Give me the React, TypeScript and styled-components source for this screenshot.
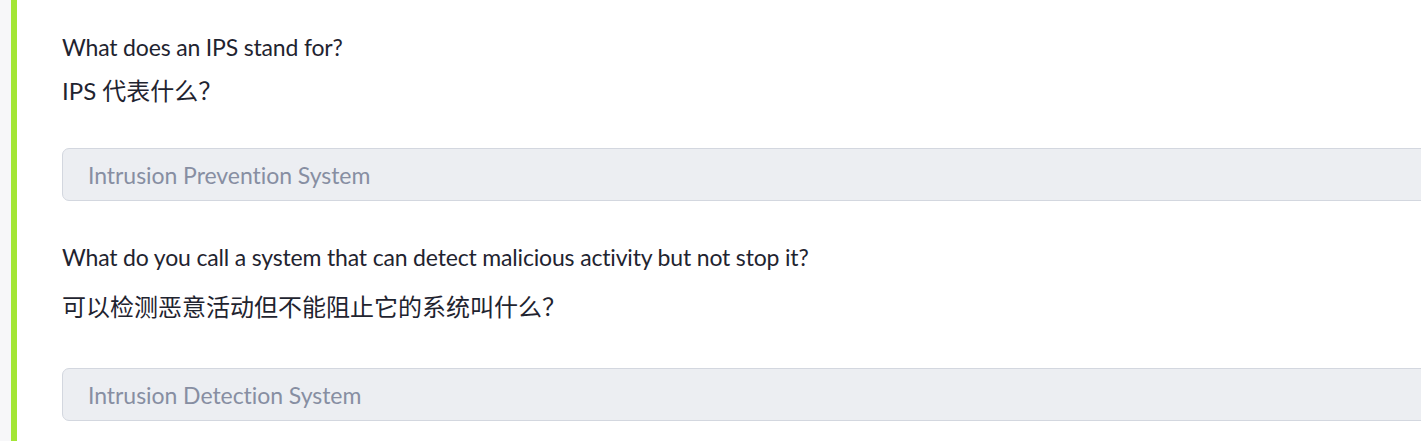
import React from "react";
import styled, { createGlobalStyle } from "styled-components";

const Global = createGlobalStyle`
  html, body { margin: 0; padding: 0; background: #ffffff; overflow: hidden; }
  body { font-family: Lato, "Noto Sans CJK SC", sans-serif; }
`;

const Page = styled.div`
  display: flex;
  width: 1421px;
  height: 441px;
  overflow: hidden;
`;

const Gutter = styled.div`
  width: 11px;
  flex: none;
  background: #f7f7f9;
`;

const Accent = styled.div`
  width: 6px;
  flex: none;
  background: #a3e635;
`;

const Content = styled.div`
  flex: none;
  width: 1440px;
  padding: 32px 0 0 45px;
  display: flex;
  flex-direction: column;
`;

const Question = styled.div<{ $after: number }>`
  display: flex;
  flex-direction: column;
  margin-bottom: ${(p) => p.$after}px;
`;

const English = styled.div`
  font-family: Lato, "Noto Sans", sans-serif;
  font-size: 23px;
  line-height: 30px;
  color: #1f2430;
  letter-spacing: -0.17px;
`;

const Chinese = styled.div<{ $top: number; $bottom: number }>`
  font-family: Lato, "Noto Sans CJK SC", sans-serif;
  font-size: 24px;
  line-height: 34px;
  color: #1f2430;
  margin-top: ${(p) => p.$top}px;
  margin-bottom: ${(p) => p.$bottom}px;
`;

const Answer = styled.div`
  box-sizing: border-box;
  height: 53px;
  width: 100%;
  border: 1px solid #d3d7df;
  border-radius: 7px;
  background: #eceef2;
  display: flex;
  align-items: center;
  padding-left: 25px;
  font-family: Lato, "Noto Sans", sans-serif;
  font-size: 23px;
  letter-spacing: -0.05px;
  color: #878ea2;
`;

const items = [
  {
    en: "What does an IPS stand for?",
    zh: "IPS 代表什么？",
    answer: "Intrusion Prevention System",
    top: 12,
    bottom: 40,
    after: 41,
  },
  {
    en: "What do you call a system that can detect malicious activity but not stop it?",
    zh: "可以检测恶意活动但不能阻止它的系统叫什么？",
    answer: "Intrusion Detection System",
    top: 18,
    bottom: 44,
    after: 0,
  },
];

export default function App() {
  return (
    <Page>
      <Global />
      <Gutter />
      <Accent />
      <Content>
        {items.map((it) => (
          <Question key={it.answer} $after={it.after}>
            <English>{it.en}</English>
            <Chinese $top={it.top} $bottom={it.bottom}>{it.zh}</Chinese>
            <Answer>{it.answer}</Answer>
          </Question>
        ))}
      </Content>
    </Page>
  );
}
